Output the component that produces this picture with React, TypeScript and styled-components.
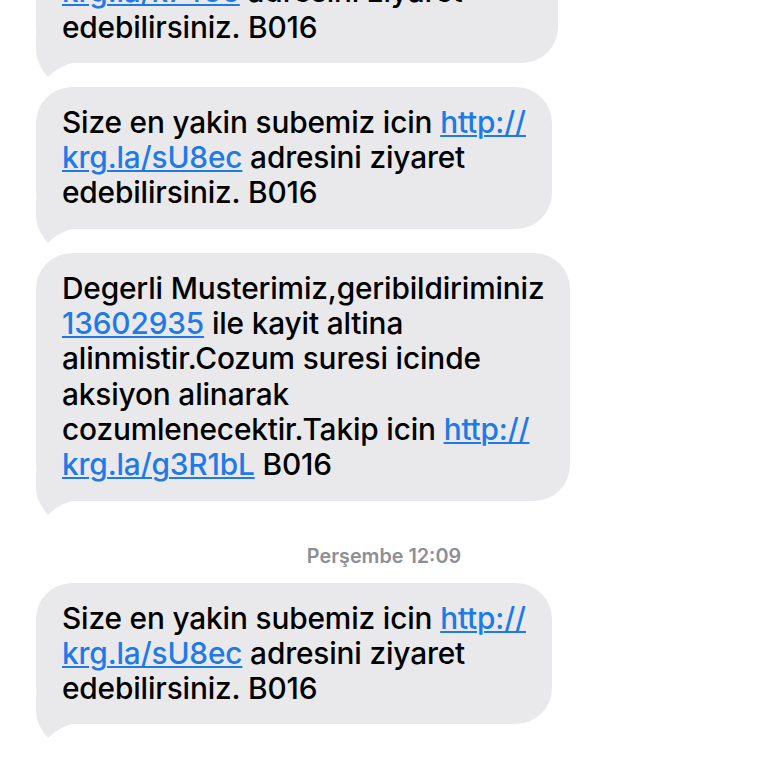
import React from "react";
import styled, { createGlobalStyle } from "styled-components";

const Global = createGlobalStyle`
  html, body { margin: 0; padding: 0; background: #ffffff; }
  body { font-family: "Inter", "Liberation Sans", sans-serif; overflow: hidden; }
`;

const Thread = styled.div`
  display: flex;
  flex-direction: column;
  align-items: flex-start;
  padding: 0 0 0 36px;
  margin-top: -79px;
  height: 847px;
  overflow: hidden;
`;

const Bubble = styled.div<{ $minWidth?: number; $gapTop?: number }>`
  position: relative;
  box-sizing: border-box;
  background: #e9e9eb;
  border-radius: 36px;
  padding: 18px 26px;
  margin-top: ${(p) => p.$gapTop ?? 24}px;
  min-width: ${(p) => (p.$minWidth ? `${p.$minWidth}px` : "0")};
  font-size: 29.8px;
  font-weight: 500;
  line-height: 35.3px;
  color: #000;
  letter-spacing: -0.15px;
`;

const Line = styled.div`
  white-space: nowrap;
  position: relative;
  z-index: 1;
`;

const Link = styled.span`
  color: #1f7ae8;
  text-decoration: underline;
  text-decoration-thickness: 2px;
  text-underline-offset: 2px;
`;

const TailSvg = styled.svg`
  position: absolute;
  left: 0;
  bottom: -14px;
  width: 40px;
  height: 44px;
`;

const Stamp = styled.div`
  align-self: stretch;
  margin: 44px 0 16px -36px;
  text-align: center;
  font-size: 19.8px;
  line-height: 22px;
  font-weight: 600;
  color: #8e8e93;
`;

const Tail = () => (
  <TailSvg viewBox="0 0 40 44">
    <path d="M0 0 L0 16 C0 28 6 37 12 44 C18 38 26 32 40 29 L40 0 Z" fill="#e9e9eb" />
  </TailSvg>
);

export default function App() {
  return (
    <>
      <Global />
      <Thread>
        <Bubble $gapTop={0} $minWidth={522}>
          <Line>Size en yakin subemiz icin <Link>http://</Link></Line>
          <Line><Link>krg.la/k7466</Link> adresini ziyaret</Line>
          <Line>edebilirsiniz. B016</Line>
          <Tail />
        </Bubble>
        <Bubble>
          <Line>Size en yakin subemiz icin <Link>http://</Link></Line>
          <Line><Link>krg.la/sU8ec</Link> adresini ziyaret</Line>
          <Line>edebilirsiniz. B016</Line>
          <Tail />
        </Bubble>
        <Bubble>
          <Line>Degerli Musterimiz,geribildiriminiz</Line>
          <Line><Link>13602935</Link> ile kayit altina</Line>
          <Line>alinmistir.Cozum suresi icinde</Line>
          <Line>aksiyon alinarak</Line>
          <Line>cozumlenecektir.Takip icin <Link>http://</Link></Line>
          <Line><Link>krg.la/g3R1bL</Link> B016</Line>
          <Tail />
        </Bubble>
        <Stamp>Perşembe 12:09</Stamp>
        <Bubble $gapTop={0}>
          <Line>Size en yakin subemiz icin <Link>http://</Link></Line>
          <Line><Link>krg.la/sU8ec</Link> adresini ziyaret</Line>
          <Line>edebilirsiniz. B016</Line>
          <Tail />
        </Bubble>
      </Thread>
    </>
  );
}
